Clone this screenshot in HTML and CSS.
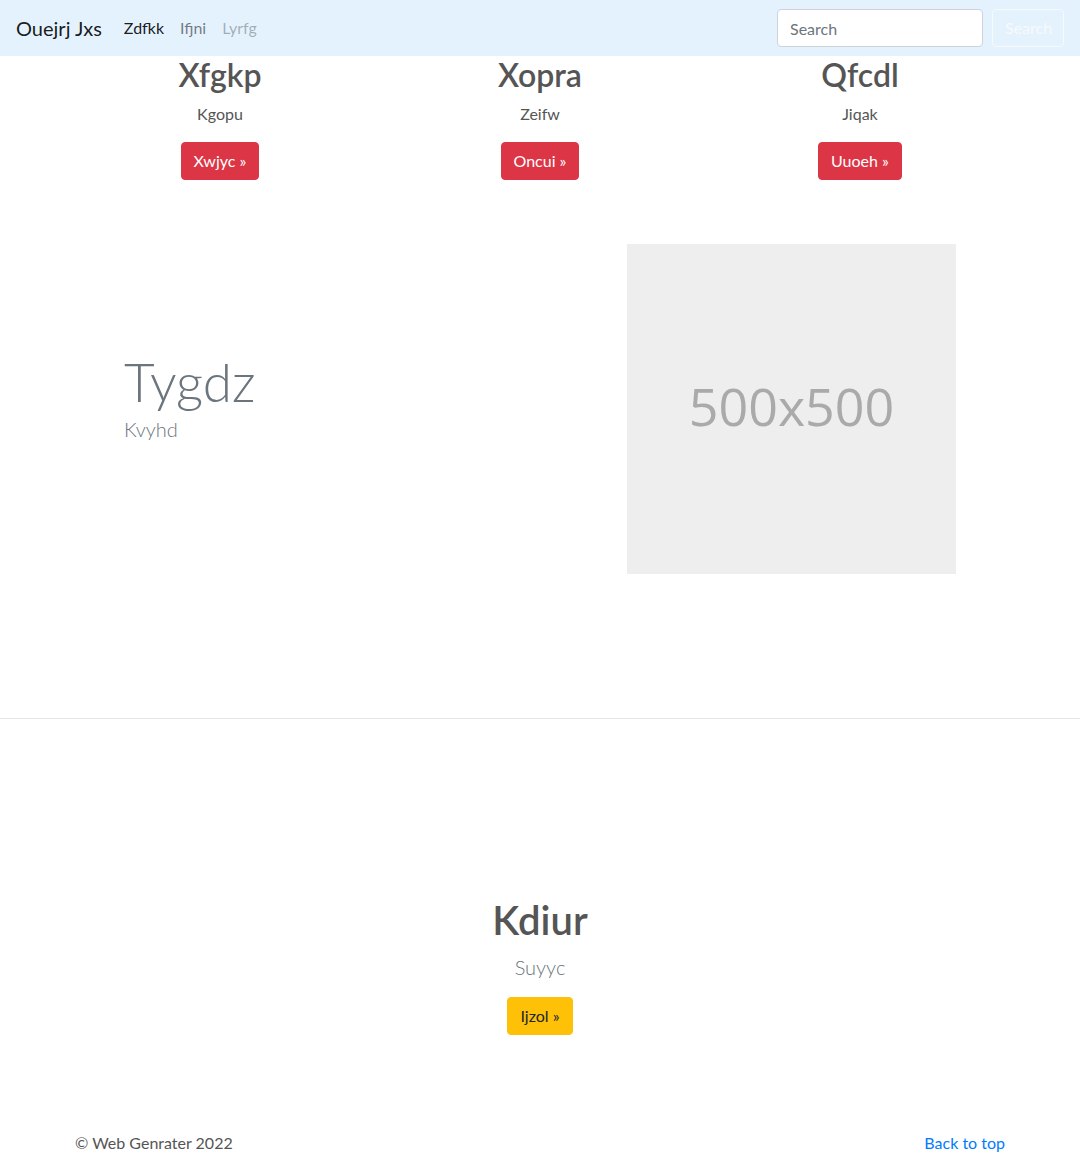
FILE: index.html
```html
<!DOCTYPE html>
<html lang="en">
<head>
<meta charset="utf-8">
<title>Ouejrj Jxs</title>
<link rel="stylesheet" href="styles.css">
</head>
<body>
<nav class="navbar">
  <a class="brand" href="#">Ouejrj Jxs</a>
  <ul class="nav-links">
    <li><a class="nav-link active" href="#">Zdfkk</a></li>
    <li><a class="nav-link" href="#">Ifjni</a></li>
    <li><a class="nav-link disabled" href="#">Lyrfg</a></li>
  </ul>
  <form class="search-form">
    <input class="search-input" type="text" placeholder="Search">
    <button class="btn btn-outline-light" type="button">Search</button>
  </form>
</nav>

<main>
  <section class="container marketing">
    <div class="col">
      <h2 class="col-title">Xfgkp</h2>
      <p class="col-text">Kgopu</p>
      <p class="col-action"><a class="btn btn-danger" href="#">Xwjyc &raquo;</a></p>
    </div>
    <div class="col">
      <h2 class="col-title">Xopra</h2>
      <p class="col-text">Zeifw</p>
      <p class="col-action"><a class="btn btn-danger" href="#">Oncui &raquo;</a></p>
    </div>
    <div class="col">
      <h2 class="col-title">Qfcdl</h2>
      <p class="col-text">Jiqak</p>
      <p class="col-action"><a class="btn btn-danger" href="#">Uuoeh &raquo;</a></p>
    </div>
  </section>

  <section class="container featurette">
    <div class="featurette-text">
      <h1 class="display-heading">Tygdz</h1>
      <p class="lead muted">Kvyhd</p>
    </div>
    <div class="placeholder">500x500</div>
  </section>

  <hr class="divider">

  <section class="hero">
    <h1 class="hero-title">Kdiur</h1>
    <p class="lead muted hero-lead">Suyyc</p>
    <p class="hero-action"><a class="btn btn-warning" href="#">Ijzol &raquo;</a></p>
  </section>
</main>

<footer class="container footer">
  <p class="copyright">&copy; Web Genrater 2022</p>
  <a class="back-top" href="#">Back to top</a>
</footer>
</body>
</html>
```

FILE: styles.css
```css
* { box-sizing: border-box; }

html, body {
  margin: 0;
  padding: 0;
}

body {
  font-family: Lato, "Open Sans", sans-serif;
  font-size: 16px;
  line-height: 1.5;
  color: #555555;
  background: #ffffff;
}

a { text-decoration: none; }

/* Navbar */
.navbar {
  height: 56px;
  background: #e3f2fd;
  display: flex;
  align-items: center;
  padding: 8px 16px;
}

.brand {
  font-size: 20px;
  line-height: 30px;
  color: rgba(0, 0, 0, 0.9);
  margin-right: 14px;
}

.nav-links {
  display: flex;
  list-style: none;
  margin: 0;
  padding: 0;
  flex: 1;
}

.nav-link {
  display: block;
  padding: 8px;
  color: rgba(0, 0, 0, 0.5);
}

.nav-link.active { color: rgba(0, 0, 0, 0.9); }
.nav-link.disabled { color: rgba(0, 0, 0, 0.3); }

.search-form {
  display: flex;
  align-items: center;
}

.search-input {
  width: 206px;
  height: 38px;
  padding: 6px 12px;
  font-family: inherit;
  font-size: 16px;
  color: #495057;
  background: #ffffff;
  border: 1px solid #ced4da;
  border-radius: 4px;
  margin-right: 9px;
  outline: none;
}

.search-input::placeholder { color: #6c757d; }

/* Buttons */
.btn {
  display: inline-block;
  font-family: inherit;
  font-size: 16px;
  line-height: 24px;
  padding: 6px 12px;
  border: 1px solid transparent;
  border-radius: 4px;
  cursor: pointer;
  background: transparent;
}

.btn-outline-light {
  color: #f8f9fa;
  border-color: #f8f9fa;
  width: 72px;
  height: 38px;
}

.btn-danger {
  color: #ffffff;
  background: #dc3545;
  border-color: #dc3545;
}

.btn-warning {
  color: #212529;
  background: #ffc107;
  border-color: #ffc107;
}

/* Layout */
.container {
  width: 960px;
  margin: 0 auto;
}

.marketing {
  display: grid;
  grid-template-columns: repeat(3, 1fr);
}

.col {
  padding: 0 15px;
  text-align: center;
}

.col-title {
  margin: 0 0 8px;
  font-size: 32px;
  line-height: 38.4px;
  font-weight: 600;
  color: #555555;
}

.col-text {
  margin: 0 0 16px;
}

.col-action {
  margin: 0 0 16px;
}

.featurette {
  display: flex;
  padding: 48px 64px 144px;
}

.featurette-text {
  flex: 1;
  padding-top: 106px;
}

.display-heading {
  margin: 0;
  font-size: 53px;
  line-height: 64px;
  font-weight: 300;
  color: #6c757d;
}

.lead {
  font-size: 20px;
  line-height: 30px;
  font-weight: 300;
  margin: 0 0 16px;
}

.muted { color: #6c757d; }

.placeholder {
  width: 329px;
  height: 330px;
  padding-bottom: 6px;
  background: #eeeeee;
  color: #aaaaaa;
  font-family: "Open Sans", sans-serif;
  font-size: 52px;
  display: flex;
  align-items: center;
  justify-content: center;
}

.divider {
  margin: 0;
  border: 0;
  border-top: 1px solid rgba(0, 0, 0, 0.1);
}

.hero {
  text-align: center;
  padding-top: 177px;
}

.hero-title {
  margin: 0 0 8px;
  font-size: 40px;
  line-height: 48px;
  font-weight: 600;
  color: #555555;
}

.hero-lead { margin-bottom: 15px; }

.hero-action { margin: 0; }

.footer {
  display: flex;
  justify-content: space-between;
  padding: 96px 15px 0;
}

.copyright {
  margin: 0;
  color: #555555;
}

.back-top {
  color: #007bff;
}
```
